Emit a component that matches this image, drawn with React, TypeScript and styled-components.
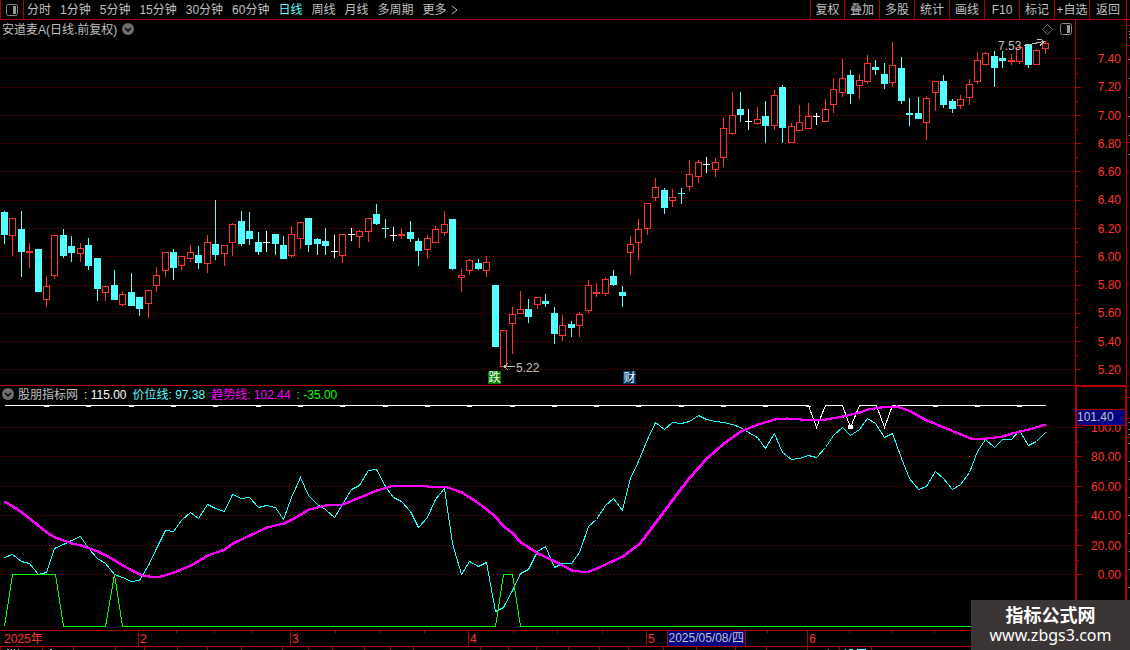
import React from "react";
import styled, { createGlobalStyle } from "styled-components";

const RED = "#b00000";
const BRIGHT_RED = "#ff3232";
const CYAN = "#54ffff";
const GREY = "#c0c0c0";

const GlobalStyle = createGlobalStyle`
  * { box-sizing: border-box; }
  body {
    margin: 0;
    background: #000;
    color: ${GREY};
    font: 12px/14px "Liberation Sans", "Noto Sans CJK SC", sans-serif;
    overflow: hidden;
  }
  button {
    margin: 0;
    padding: 0;
    border: 0;
    background: none;
    color: inherit;
    font: inherit;
    cursor: pointer;
  }
`;

/* ---------- data ---------- */

type Kind = "r" | "c" | "w";
// kind, high, body top, body bottom, low
type Candle = [Kind, number, number, number, number];

const candles: Candle[] = [
  ["c", 211, 212, 235, 244], ["r", 218, 218, 236, 256], ["c", 211, 229, 252, 277], ["r", 243, 251, 253, 268],
  ["c", 249, 249, 292, 292], ["r", 276, 286, 300, 307], ["r", 235, 235, 276, 279], ["c", 229, 235, 256, 258],
  ["c", 236, 246, 253, 262], ["r", 243, 248, 254, 262], ["c", 238, 245, 266, 270], ["c", 258, 258, 289, 301],
  ["r", 286, 286, 293, 301], ["c", 270, 285, 300, 300], ["r", 291, 294, 305, 306], ["c", 273, 292, 306, 306],
  ["c", 297, 297, 309, 316], ["r", 290, 290, 304, 318], ["r", 267, 275, 286, 292], ["r", 252, 252, 271, 277],
  ["c", 249, 252, 268, 280], ["r", 256, 256, 266, 270], ["r", 245, 252, 259, 262], ["c", 246, 255, 263, 269],
  ["r", 235, 242, 264, 273], ["c", 200, 244, 255, 260], ["r", 245, 245, 254, 266], ["r", 223, 224, 243, 256],
  ["c", 211, 221, 244, 246], ["c", 212, 231, 239, 245], ["c", 232, 242, 252, 255], ["w", 231, 242, 243, 252],
  ["c", 234, 234, 244, 255], ["c", 236, 245, 259, 259], ["r", 226, 234, 256, 258], ["r", 222, 222, 239, 249],
  ["c", 218, 218, 245, 252], ["c", 238, 239, 244, 255], ["c", 228, 241, 246, 255], ["w", 235, 251, 252, 258],
  ["r", 234, 234, 256, 263], ["w", 228, 234, 235, 241], ["r", 230, 231, 237, 248], ["r", 218, 218, 232, 242],
  ["c", 204, 214, 224, 225], ["c", 219, 228, 229, 238], ["w", 227, 235, 236, 241], ["r", 229, 234, 236, 239],
  ["c", 221, 232, 239, 242], ["c", 238, 241, 251, 266], ["r", 235, 238, 250, 259], ["r", 226, 229, 243, 243],
  ["r", 211, 224, 233, 236], ["c", 219, 219, 269, 270], ["r", 269, 275, 278, 292], ["r", 259, 260, 271, 275],
  ["c", 259, 263, 269, 270], ["r", 256, 262, 271, 277], ["c", 285, 285, 347, 347], ["r", 330, 330, 367, 367],
  ["r", 307, 314, 324, 354], ["r", 291, 309, 314, 314], ["c", 299, 309, 317, 323], ["r", 297, 297, 305, 309],
  ["c", 294, 301, 304, 307], ["c", 307, 313, 334, 344], ["r", 315, 325, 336, 341], ["c", 321, 324, 328, 337],
  ["r", 312, 314, 326, 337], ["r", 280, 285, 311, 313], ["r", 283, 292, 294, 297], ["r", 277, 279, 294, 296],
  ["c", 270, 276, 285, 286], ["c", 286, 292, 296, 307], ["r", 236, 244, 253, 275], ["r", 219, 229, 243, 260],
  ["r", 203, 203, 229, 235], ["r", 178, 187, 198, 201], ["c", 188, 190, 208, 214], ["r", 189, 197, 201, 207],
  ["c", 188, 193, 194, 204], ["r", 160, 174, 187, 191], ["r", 160, 162, 177, 183], ["w", 157, 164, 165, 173],
  ["r", 158, 162, 170, 177], ["r", 117, 128, 158, 167], ["r", 92, 115, 134, 135], ["c", 92, 109, 115, 122],
  ["w", 109, 121, 122, 130], ["r", 107, 119, 124, 125], ["c", 101, 116, 126, 143], ["r", 90, 95, 126, 130],
  ["c", 85, 87, 128, 143], ["r", 123, 126, 143, 143], ["r", 105, 122, 131, 131], ["r", 103, 116, 129, 129],
  ["w", 113, 116, 117, 125], ["r", 99, 109, 122, 122], ["r", 78, 89, 105, 113], ["r", 59, 78, 93, 97],
  ["c", 70, 75, 94, 104], ["r", 74, 80, 86, 99], ["r", 55, 63, 82, 84], ["c", 60, 67, 70, 75],
  ["c", 63, 74, 84, 89], ["r", 42, 65, 83, 87], ["c", 57, 68, 101, 104], ["c", 98, 113, 115, 126],
  ["c", 97, 113, 119, 119], ["r", 96, 98, 123, 140], ["r", 81, 81, 93, 111], ["c", 75, 81, 105, 108],
  ["c", 99, 101, 109, 113], ["r", 95, 99, 106, 109], ["r", 79, 84, 98, 105], ["r", 52, 60, 82, 84],
  ["r", 52, 53, 65, 65], ["c", 51, 56, 68, 87], ["c", 51, 58, 61, 68], ["r", 54, 60, 62, 65],
  ["r", 47, 47, 62, 64], ["c", 44, 44, 65, 68], ["r", 49, 50, 65, 65], ["r", 41, 43, 49, 54],
];

const priceLine = [
  557, 554, 561, 563, 574, 572, 548, 544, 540, 536, 548, 558, 563, 574, 577, 581, 580, 565, 548, 530, 531, 520,
  512, 518, 504, 508, 511, 494, 498, 497, 507, 505, 507, 519, 497, 477, 495, 504, 509, 517, 504, 489, 485, 470,
  469, 486, 497, 501, 511, 527, 517, 499, 488, 543, 574, 561, 566, 562, 611, 607, 590, 573, 569, 551, 546, 567,
  563, 563, 552, 526, 519, 505, 498, 510, 478, 461, 439, 422, 429, 422, 423, 421, 415, 419, 421, 422, 424, 427,
  432, 437, 448, 433, 452, 459, 458, 455, 457, 447, 435, 427, 435, 429, 418, 423, 437, 433, 458, 478, 489, 486,
  471, 478, 489, 484, 472, 451, 439, 447, 439, 439, 430, 445, 441, 432,
];

const trendLine =
  "4,501 21,512 46,532 54,537 71,543 80,545 97,551 105,555 114,560 122,565 131,570 141,575 148,576 160,576 173,572 190,565 207,555 224,549 232,543 249,535 266,527 283,523 291,519 300,514 308,509 325,505 342,504 359,497 376,490 393,485 410,485 427,486 444,486 461,492 478,503 486,509 495,517 503,526 512,533 520,542 537,553 554,561 571,570 579,571 588,571 596,568 613,560 622,556 630,550 639,543 655,522 672,499 689,477 706,458 723,443 740,431 757,424 774,419 786,418 800,419 825,419 842,416 859,412 867,409 880,407 896,406 910,411 918,416 926,420 943,427 960,434 970,438 986,438 1002,436 1011,433 1028,429 1045,424";

const signalLine =
  "4,626 12,574 55,574 63,626 105,626 114,574 122,626 495,626 503,574 512,574 520,626 1075,626";

const topLine = "4,405 808,405 816,427 825,405 842,405 850,427 859,405 876,405 884,427 892,405 1045,405";

const upperGrid = [58, 87, 115, 143, 171, 200, 228, 256, 285, 313, 341, 369];
const lowerGrid = [427, 456, 486, 515, 545, 574];
const priceLabels = ["7.40", "7.20", "7.00", "6.80", "6.60", "6.40", "6.20", "6.00", "5.80", "5.60", "5.40", "5.20"];
const valueLabels = ["100.0", "80.00", "60.00", "40.00", "20.00", "0.00"];

const periods = ["分时", "1分钟", "5分钟", "15分钟", "30分钟", "60分钟", "日线", "周线", "月线", "多周期"];
const actions = ["复权", "叠加", "多股", "统计", "画线", "F10", "标记", "+自选", "返回"];

const months = ["2025年", "2", "3", "4", "5", "6"];
const weekTicks = [176, 214, 252, 335, 379, 424, 513, 557, 602, 767, 849, 892, 934];
const footerTicks = [
  0, 42, 73, 115, 144, 177, 207, 241, 282, 308, 332, 364, 390, 413, 480, 508, 536, 568, 599, 628, 663, 696, 735,
  766, 807, 839, 871,
];

const candleX = (i: number) => Math.floor(4.2 + i * 8.4634);

/* ---------- styled parts ---------- */

const Page = styled.div`
  position: relative;
  display: flex;
  flex-direction: column;
  min-height: 100vh;
  background: #000;
`;

const Toolbar = styled.header`
  display: flex;
  height: 20px;
  padding-right: 3px;
  border-bottom: 1px solid ${RED};
`;

const PanelToggle = styled.button`
  display: flex;
  align-items: center;
  justify-content: center;
  width: 24px;
  border-left: 1px solid ${RED};
  border-right: 1px solid ${RED};
`;

const Periods = styled.nav`
  display: flex;
  flex: 1;
  align-items: center;
  gap: 9px;
  padding-left: 3px;
  white-space: nowrap;
`;

const Period = styled.button<{ $active?: boolean }>`
  display: flex;
  align-items: center;
  gap: 4px;
  color: ${(p) => (p.$active ? CYAN : GREY)};
`;

const Actions = styled.div`
  display: grid;
  grid-template-columns: 34px repeat(7, 35px) 38px;
`;

const Action = styled.button`
  border-left: 1px solid ${RED};
  white-space: nowrap;

  &:last-child {
    border-right: 1px solid ${RED};
  }
`;

const Workspace = styled.div`
  display: flex;
`;

const Panes = styled.main`
  flex: 1;
  min-width: 0;
`;

const Pane = styled.section`
  display: flex;
`;

const LowerPane = styled(Pane)`
  border-top: 1px solid ${RED};
`;

const Plot = styled.div`
  position: relative;
  flex: 1;
  min-width: 0;
`;

const TitleRow = styled.div`
  display: flex;
  align-items: center;
  justify-content: space-between;
  height: 18px;
  padding: 0 3px 0 2px;
`;

const TitleGroup = styled.div`
  display: flex;
  align-items: center;
  gap: 5px;
`;

const TitleText = styled.span`
  padding-top: 2px;
`;

const IconGroup = styled.div`
  display: flex;
  align-items: center;
  gap: 7px;
`;

const IconButton = styled.button`
  display: flex;
`;

const InfoRow = styled.div`
  display: flex;
  align-items: center;
  gap: 6px;
  height: 16px;
  padding-left: 2px;
  white-space: nowrap;
`;

const InfoName = styled(TitleText)`
  margin-left: -2px;
`;

const Reading = styled(TitleText)<{ $color: string }>`
  color: ${(p) => p.$color};
`;

const Drawing = styled.svg<{ $height: number }>`
  display: block;
  width: 100%;
  height: ${(p) => p.$height}px;
`;

const Axis = styled.div<{ $strong?: boolean }>`
  position: relative;
  display: flex;
  flex-shrink: 0;
  width: 51px;
  border-left: ${(p) => (p.$strong ? 2 : 1)}px solid ${RED};
  ${(p) => p.$strong && `border-right: 1px solid ${RED}; border-top: 1px solid ${RED};`}
`;

const AxisTicks = styled.svg`
  display: block;
  flex-shrink: 0;
  width: 5px;
`;

const AxisLabels = styled.ol<{ $top: number; $bottom: number; $right: number }>`
  display: flex;
  flex: 1;
  flex-direction: column;
  justify-content: space-between;
  margin: 0;
  padding: ${(p) => p.$top}px ${(p) => p.$right}px ${(p) => p.$bottom}px 0;
  list-style: none;
  text-align: right;
  color: ${BRIGHT_RED};
`;

const CursorValue = styled.output`
  position: absolute;
  top: 22px;
  left: 0;
  right: 0;
  height: 17px;
  border-top: 1px solid ${RED};
  border-bottom: 1px solid ${RED};
  background: #000080;
  line-height: 15px;
`;

const Annotation = styled.span<{ $x: number; $top: number }>`
  position: absolute;
  left: ${(p) => (p.$x / 1075) * 100}%;
  top: ${(p) => p.$top}px;
`;

const Badge = styled(Annotation)<{ $fill: string }>`
  width: 13px;
  height: 13px;
  background: ${(p) => p.$fill};
  color: #fff;
  line-height: 14px;
  text-align: center;
`;

const Edge = styled.svg`
  display: block;
  flex-shrink: 0;
  width: 4px;
  height: 610px;
`;

const TimeAxis = styled.div`
  position: relative;
  display: grid;
  grid-template-columns: 138fr 152fr 178fr 178fr 161fr 323fr;
  height: 17px;
  border-top: 1px solid ${RED};
  border-bottom: 1px solid ${RED};
  color: ${BRIGHT_RED};
`;

const Month = styled.span`
  min-width: 0;
  padding-left: 1px;
  border-left: 1px solid ${RED};
  line-height: 16px;

  &:first-child {
    padding-left: 4px;
    border-left: 0;
  }
`;

const WeekTicks = styled.svg`
  position: absolute;
  top: 0;
  left: 0;
  width: 100%;
  height: 2px;
`;

const CursorDate = styled.time`
  position: absolute;
  top: 0;
  left: 59%;
  width: 79px;
  height: 15px;
  border-left: 1px solid ${RED};
  border-right: 1px solid ${RED};
  background: #000080;
  color: ${GREY};
  line-height: 14px;
  text-align: center;
  white-space: nowrap;
`;

const Watermark = styled.a`
  position: absolute;
  right: 0;
  bottom: 0;
  display: flex;
  flex-direction: column;
  align-items: center;
  width: 159px;
  height: 50px;
  padding-top: 4px;
  background: #3b3535;
  color: #fff;
  font: 16px/22px "Noto Sans", "Noto Sans CJK SC", sans-serif;
  text-decoration: none;
`;

const WatermarkName = styled.strong`
  font: 700 18px/20px "Noto Sans CJK SC", sans-serif;
`;

/* ---------- drawings ---------- */

const PanelIcon = () => (
  <svg width="12" height="12" viewBox="0 0 12 12" aria-hidden="true">
    <rect x="0.5" y="0.5" width="11" height="11" rx="2" fill="none" stroke="#888" />
    <rect x="7" y="2" width="3" height="8" fill="#999" />
  </svg>
);

const ExpandIcon = () => (
  <svg width="12" height="12" viewBox="0 0 12 12" aria-hidden="true">
    <circle cx="6" cy="6" r="6" fill="#707070" />
    <path d="M3 5l3 3 3-3" fill="none" stroke="#000" strokeWidth="1.5" />
  </svg>
);

const Grid = ({ rows }: { rows: number[] }) => (
  <g stroke={RED} strokeDasharray="1 3">
    {rows.map((y) => (
      <line key={y} x1="1" x2="1075" y1={y + 0.5} y2={y + 0.5} />
    ))}
  </g>
);

const candleColor: Record<Kind, string> = { r: BRIGHT_RED, c: CYAN, w: "#fff" };

const CandleMark = ({ index, data }: { index: number; data: Candle }) => {
  const [kind, high, top, bottom, low] = data;
  const x = candleX(index);
  const hollow = kind === "r" && bottom - top > 2;
  return (
    <g fill={candleColor[kind]}>
      <rect x={x} y={high} width="1" height={low - high} />
      <rect x={x - 3} y={top} width="7" height={bottom - top} />
      {hollow && <rect x={x - 2} y={top + 1} width="5" height={bottom - top - 2} fill="#000" />}
    </g>
  );
};

const CandleChart = () => (
  <Drawing
    $height={347}
    viewBox="0 38 1075 347"
    preserveAspectRatio="none"
    shapeRendering="crispEdges"
    role="img"
    aria-label="日线"
  >
    <Grid rows={upperGrid} />
    {candles.map((c, i) => (
      <CandleMark key={i} index={i} data={c} />
    ))}
    <g stroke={GREY} fill="none">
      <path d="M503 366.5H515M508 363.5L504 366.5L508 369.5" />
      <path d="M1024 45.5L1030 44.5L1043 41.5M1037 39.5H1041L1044 41.5L1040 45.5" />
    </g>
  </Drawing>
);

const IndicatorChart = () => (
  <Drawing
    $height={228}
    viewBox="0 402 1075 228"
    preserveAspectRatio="none"
    shapeRendering="crispEdges"
    role="img"
    aria-label="股朋指标网"
  >
    <Grid rows={lowerGrid} />
    <g fill="none" transform="translate(0.5 0.5)">
      <polyline points={topLine} stroke="#fff" />
      <polyline points={priceLine.map((y, i) => `${candleX(i)},${y}`).join(" ")} stroke="#1cffff" />
      <polyline points={signalLine} stroke="#00ff00" />
      <g stroke="#ff00ff" strokeWidth="2">
        <polyline points={trendLine} />
        <polyline points={trendLine} transform="translate(1 0)" />
      </g>
    </g>
    <g fill="#fff">
      {Array.from({ length: 24 }, (_, k) => (k + 1) * 5)
        .filter((i) => i !== 100 && i !== 105)
        .map((i) => (
          <rect key={i} x={candleX(i) - 2} y="406" width="5" height="1" />
        ))}
      <rect x="848" y="425" width="5" height="4" />
    </g>
  </Drawing>
);

const Ticks = ({ rows, top, height }: { rows: number[]; top: number; height: number }) => (
  <AxisTicks height={height} viewBox={`0 ${top} 5 ${height}`} shapeRendering="crispEdges" aria-hidden="true">
    {rows.map((y, i) => (
      <g key={y} fill={RED}>
        <rect x="0" y={y} width="5" height="1" />
        {i < rows.length - 1 && <rect x="0" y={Math.round((y + rows[i + 1]) / 2)} width="2" height="1" />}
      </g>
    ))}
  </AxisTicks>
);

const EdgeStrip = () => (
  <Edge viewBox="0 20 4 610" shapeRendering="crispEdges" aria-hidden="true">
    <rect x="0" y="20" width="1" height="610" fill={RED} />
    {[25, 45, 142, 397, 418, 437].map((y) => (
      <rect key={y} x="1" y={y} width="3" height="1" fill={RED} />
    ))}
    {[31, 34, 37, 59, 78, 97, 116, 135, 154, 422, 429, 434, 443, 461, 479, 497, 515, 533, 551, 569, 587].map((y) => (
      <rect key={y} x="3" y={y} width="1" height="1" fill={GREY} />
    ))}
  </Edge>
);

export default function App() {
  return (
    <Page>
      <GlobalStyle />
      <Toolbar>
        <PanelToggle aria-label="侧栏">
          <PanelIcon />
        </PanelToggle>
        <Periods>
          {periods.map((p) => (
            <Period key={p} $active={p === "日线"}>
              {p}
            </Period>
          ))}
          <Period>
            更多
            <svg width="7" height="10" viewBox="0 0 7 10" aria-hidden="true">
              <path d="M1 1l5 4-5 4" fill="none" stroke={GREY} />
            </svg>
          </Period>
        </Periods>
        <Actions>
          {actions.map((a) => (
            <Action key={a}>{a}</Action>
          ))}
        </Actions>
      </Toolbar>

      <Workspace>
        <Panes>
          <Pane>
            <Plot>
              <TitleRow>
                <TitleGroup>
                  <TitleText>安道麦A(日线.前复权)</TitleText>
                  <IconButton aria-label="展开">
                    <ExpandIcon />
                  </IconButton>
                </TitleGroup>
                <IconGroup>
                  <svg width="11" height="11" viewBox="0 0 11 11" aria-hidden="true">
                    <path d="M5.5 0.5l5 5-5 5-5-5z" fill="none" stroke="#777" />
                  </svg>
                  <IconButton aria-label="面板">
                    <PanelIcon />
                  </IconButton>
                </IconGroup>
              </TitleRow>
              <CandleChart />
              <Annotation $x={998} $top={19}>7.53</Annotation>
              <Annotation $x={516} $top={341}>5.22</Annotation>
              <Badge $x={488} $top={351} $fill="#008000">跌</Badge>
              <Badge $x={623} $top={351} $fill="#003868">财</Badge>
            </Plot>
            <Axis>
              <Ticks rows={upperGrid} top={20} height={365} />
              <AxisLabels $top={32} $bottom={8} $right={5}>
                {priceLabels.map((l) => (
                  <li key={l}>{l}</li>
                ))}
              </AxisLabels>
            </Axis>
          </Pane>

          <LowerPane>
            <Plot>
              <InfoRow>
                <IconButton aria-label="展开">
                  <ExpandIcon />
                </IconButton>
                <InfoName>股朋指标网</InfoName>
                <Reading $color="#fff">: 115.00</Reading>
                <Reading $color={CYAN}>价位线: 97.38</Reading>
                <Reading $color="#ff00ff">趋势线: 102.44</Reading>
                <Reading $color="#00ff00">: -35.00</Reading>
              </InfoRow>
              <IndicatorChart />
            </Plot>
            <Axis $strong>
              <Ticks rows={lowerGrid} top={387} height={243} />
              <AxisLabels $top={34} $bottom={48} $right={4}>
                {valueLabels.map((l) => (
                  <li key={l}>{l}</li>
                ))}
              </AxisLabels>
              <CursorValue>101.40</CursorValue>
            </Axis>
          </LowerPane>
        </Panes>
        <EdgeStrip />
      </Workspace>

      <TimeAxis>
        {months.map((m) => (
          <Month key={m}>{m}</Month>
        ))}
        <WeekTicks viewBox="0 0 1130 2" preserveAspectRatio="none" shapeRendering="crispEdges" aria-hidden="true">
          {weekTicks.map((x) => (
            <rect key={x} x={x} y="0" width="1" height="2" fill={RED} />
          ))}
        </WeekTicks>
        <CursorDate dateTime="2025-05-08">2025/05/08/四</CursorDate>
      </TimeAxis>

      <Drawing
        $height={3}
        viewBox="0 647 1130 3"
        preserveAspectRatio="none"
        shapeRendering="crispEdges"
        aria-hidden="true"
      >
        {footerTicks.map((x) => (
          <rect key={x} x={x} y="647" width="1" height="3" fill={RED} />
        ))}
        <path d="M7 649.5h2M11 649.5h1M14 649.5h1M18 649.5h1M50 649.5h2M828 649.5h1" stroke={GREY} />
        <path d="M845 649.5h1M849 649.5h4M857 649.5h9" stroke={CYAN} />
      </Drawing>

      <Watermark href="#">
        <WatermarkName>指标公式网</WatermarkName>
        www.zbgs3.com
      </Watermark>
    </Page>
  );
}
